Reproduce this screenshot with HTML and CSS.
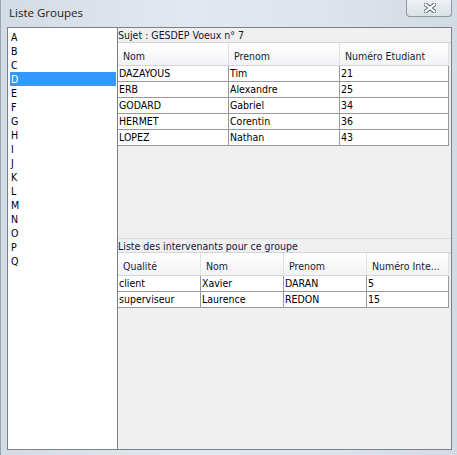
FILE: index.html
```html
<!DOCTYPE html>
<html lang="fr">
<head>
<meta charset="utf-8">
<title>Liste Groupes</title>
<link rel="stylesheet" href="styles.css">
</head>
<body>
<div class="window">
  <div class="titlebar">
    <span class="title">Liste Groupes</span>
    <div class="close">
      <svg width="12" height="10" viewBox="0 0 12 10">
        <path d="M1.5 1.5 L10.5 8.5 M10.5 1.5 L1.5 8.5" stroke="#5a6470" stroke-width="4" stroke-linecap="square" fill="none"/>
        <path d="M1.5 1.5 L10.5 8.5 M10.5 1.5 L1.5 8.5" stroke="#ffffff" stroke-width="2" stroke-linecap="square" fill="none"/>
      </svg>
    </div>
  </div>
  <div class="client">
    <ul class="list">
      <li>A</li><li>B</li><li>C</li><li class="sel">D</li><li>E</li><li>F</li><li>G</li><li>H</li><li>I</li><li>J</li><li>K</li><li>L</li><li>M</li><li>N</li><li>O</li><li>P</li><li>Q</li>
    </ul>
    <div class="right">
      <div class="label first">Sujet : GESDEP Voeux n° 7</div>
      <div class="pane upper">
        <table class="grid">
          <colgroup><col class="w111"><col class="w111"><col class="w109"></colgroup>
          <thead><tr><th>Nom</th><th>Prenom</th><th>Numéro Etudiant</th></tr></thead>
          <tbody>
            <tr><td>DAZAYOUS</td><td>Tim</td><td>21</td></tr>
            <tr><td>ERB</td><td>Alexandre</td><td>25</td></tr>
            <tr><td>GODARD</td><td>Gabriel</td><td>34</td></tr>
            <tr><td>HERMET</td><td>Corentin</td><td>36</td></tr>
            <tr><td>LOPEZ</td><td>Nathan</td><td>43</td></tr>
          </tbody>
        </table>
      </div>
      <div class="label second">Liste des intervenants pour ce groupe</div>
      <div class="pane lower">
        <table class="grid">
          <colgroup><col class="w83"><col class="w83"><col class="w83"><col class="w82"></colgroup>
          <thead><tr><th>Qualité</th><th>Nom</th><th>Prenom</th><th>Numéro Inte...</th></tr></thead>
          <tbody>
            <tr><td>client</td><td>Xavier</td><td>DARAN</td><td>5</td></tr>
            <tr><td>superviseur</td><td>Laurence</td><td>REDON</td><td>15</td></tr>
          </tbody>
        </table>
      </div>
    </div>
  </div>
</div>
</body>
</html>
```
FILE: styles.css
```css
html, body {
  margin: 0;
  padding: 0;
}
body {
  width: 457px;
  height: 455px;
  overflow: hidden;
  font-family: "DejaVu Sans Condensed", "DejaVu Sans", sans-serif;
  font-stretch: condensed;
  font-size: 10.5px;
  color: #000;
}
.window {
  width: 457px;
  height: 455px;
  box-sizing: border-box;
  padding: 0 5px 5px 6px;
  border-left: 1px solid #97a3b1;
  background: linear-gradient(to right, #d3dbe5 0%, #e2e8ef 40%, #dde4ec 70%, #d2dae4 100%);
  display: flex;
  flex-direction: column;
}
.titlebar {
  height: 27px;
  flex: none;
  display: flex;
  justify-content: space-between;
  align-items: flex-start;
}
.title {
  font-family: "Open Sans", "Noto Sans", sans-serif;
  font-stretch: normal;
  font-size: 11.5px;
  line-height: 16px;
  color: #1c1c1c;
  margin: 5px 0 0 2px;
}
.close {
  width: 46px;
  height: 17px;
  box-sizing: border-box;
  border: 1px solid #8e97a4;
  border-top: none;
  border-radius: 0 0 4px 4px;
  background: linear-gradient(to bottom, #edf0f4, #dbe1e8);
  display: flex;
  align-items: center;
  justify-content: center;
  padding-left: 2px;
}
.close svg {
  display: block;
}
.client {
  flex: 1;
  min-height: 0;
  display: flex;
  border: 1px solid #7b8089;
  background: #f0f0f0;
}
.list {
  width: 106px;
  flex: none;
  margin: 0;
  padding: 2px 1px 0 2px;
  list-style: none;
  background: #fff;
  border-right: 1px solid #7b8089;
}
.list li {
  height: 14px;
  line-height: 14px;
  padding-left: 1px;
}
.list li.sel {
  background: #3399ff;
  color: #fff;
}
.right {
  flex: 1;
  min-width: 0;
  display: flex;
  flex-direction: column;
}
.label {
  height: 14px;
  line-height: 14px;
  flex: none;
  color: #14143c;
  white-space: nowrap;
}
.label.first {
  padding-top: 0;
}
.label.second {
  height: 13px;
  border-top: 1px solid #d9d9d9;
}
.pane {
  flex: none;
  box-sizing: border-box;
  border-top: 1px solid #d5d5d5;
}
.pane.upper {
  height: 196px;
}
.pane.lower {
  flex: 1;
}
.grid {
  width: 331px;
  table-layout: fixed;
  border-collapse: separate;
  border-spacing: 0;
}
.w111 { width: 111px; }
.w109 { width: 109px; }
.w83 { width: 83px; }
.w82 { width: 82px; }
.grid th {
  height: 23px;
  box-sizing: border-box;
  padding: 3px 0 0 5px;
  font-weight: normal;
  text-align: left;
  color: #1a1a33;
  white-space: nowrap;
  overflow: hidden;
  background: linear-gradient(to bottom, #ffffff, #f2f3f5);
  border-right: 1px solid #e0e1e4;
  border-bottom: 1px solid #d5d5d5;
}
.grid td {
  height: 16px;
  box-sizing: border-box;
  padding: 0 0 0 1px;
  line-height: 15px;
  white-space: nowrap;
  overflow: hidden;
  background: #fff;
  border-right: 1px solid #999;
  border-bottom: 1px solid #999;
}
```
